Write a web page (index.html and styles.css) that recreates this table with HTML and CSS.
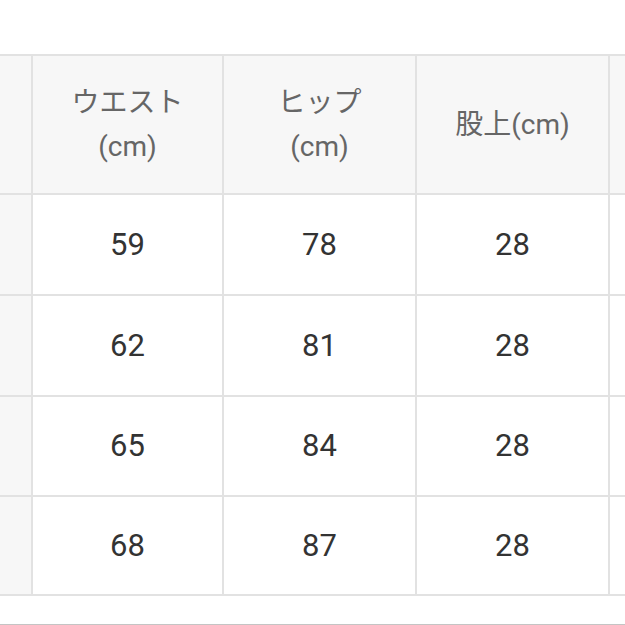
FILE: index.html
```html
<!DOCTYPE html>
<html lang="ja">
<head>
<meta charset="utf-8">
<link rel="stylesheet" href="styles.css">
</head>
<body>
<div class="page">
  <div class="size-table">
    <div class="cell side"></div>
    <div class="cell head">ウエスト<br>(cm)</div>
    <div class="cell head">ヒップ<br>(cm)</div>
    <div class="cell head">股上(cm)</div>
    <div class="cell head"></div>

    <div class="cell side"></div>
    <div class="cell">59</div>
    <div class="cell">78</div>
    <div class="cell">28</div>
    <div class="cell"></div>

    <div class="cell side"></div>
    <div class="cell">62</div>
    <div class="cell">81</div>
    <div class="cell">28</div>
    <div class="cell"></div>

    <div class="cell side"></div>
    <div class="cell">65</div>
    <div class="cell">84</div>
    <div class="cell">28</div>
    <div class="cell"></div>

    <div class="cell side"></div>
    <div class="cell">68</div>
    <div class="cell">87</div>
    <div class="cell">28</div>
    <div class="cell"></div>
  </div>
  <div class="rule"></div>
</div>
</body>
</html>
```

FILE: styles.css
```css
html, body {
  margin: 0;
  padding: 0;
  background: #ffffff;
  overflow: hidden;
}

.page {
  width: 625px;
  height: 625px;
  padding-top: 54px;
  box-sizing: border-box;
  overflow: hidden;
  font-family: Roboto, "Noto Sans CJK JP", sans-serif;
}

.size-table {
  display: grid;
  grid-template-columns: 31px 189px 191px 191px 191px;
  grid-template-rows: 137px 99px 99px 98px 97px;
  gap: 2px;
  padding: 2px 0;
  background: #e2e2e2;
  width: max-content;
}

.cell {
  background: #ffffff;
  display: flex;
  align-items: center;
  justify-content: center;
  text-align: center;
  color: #333333;
  font-size: 31px;
  line-height: 1.2;
}

.cell.head {
  background: #f7f7f7;
  color: #666666;
  font-size: 28px;
  line-height: 44px;
}

.cell.side {
  background: #f7f7f7;
}

.rule {
  margin-top: 28px;
  height: 1px;
  background: #c4c4c4;
}
```
